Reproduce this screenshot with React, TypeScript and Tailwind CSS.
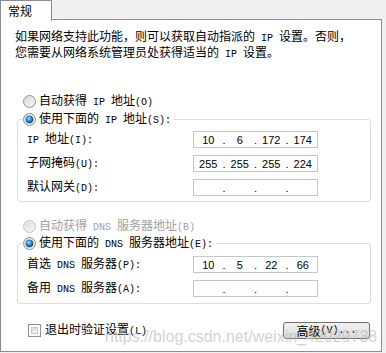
import React from 'react'

// ASCII runs are set in a mono face so they take the 6px cells of the original bitmap font
function T({ s }: { s: string }) {
  const parts = s.split(/([\x20-\x7e]+)/)
  return (
    <>
      {parts.map((p, i) =>
        /^[\x20-\x7e]+$/.test(p) ? (
          <span key={i} className="font-['Liberation_Mono',monospace] text-[10px] whitespace-pre">
            {p}
          </span>
        ) : (
          <span key={i}>{p}</span>
        )
      )}
    </>
  )
}

function Radio({ checked = false, disabled = false }: { checked?: boolean; disabled?: boolean }) {
  return (
    <svg width="13" height="13" viewBox="0 0 13 13" className="shrink-0">
      <defs>
        <linearGradient id="rbg" x1="0" y1="0" x2="1" y2="1">
          <stop offset="0" stopColor="#d6d6d6" />
          <stop offset="1" stopColor="#fbfbfb" />
        </linearGradient>
        <radialGradient id="rdot" cx="0.4" cy="0.35" r="0.7">
          <stop offset="0" stopColor="#a8dcff" />
          <stop offset="0.5" stopColor="#2d89d8" />
          <stop offset="1" stopColor="#0b3e78" />
        </radialGradient>
      </defs>
      <circle cx="6.5" cy="6.5" r="6" fill="url(#rbg)" stroke={disabled ? '#c4c4c4' : '#8e8f8f'} />
      <circle cx="6.5" cy="6.5" r="4.5" fill="none" stroke={disabled ? '#f0f0f0' : '#e4e4e4'} />
      {checked && <circle cx="6.5" cy="6.5" r="3.6" fill="url(#rdot)" stroke="#1a4f8a" strokeWidth="0.6" />}
    </svg>
  )
}

function IpBox({ parts }: { parts?: string[] }) {
  const p = parts ?? ['', '', '', '']
  return (
    <div className="w-[125px] h-[17px] border border-[#c4c8ce] bg-white flex items-center text-[11px] font-['Liberation_Sans',sans-serif] text-black">
      <span className="flex-1 text-center">{p[0]}</span>
      <span className="w-[3px]">.</span>
      <span className="flex-1 text-center">{p[1]}</span>
      <span className="w-[3px]">.</span>
      <span className="flex-1 text-center">{p[2]}</span>
      <span className="w-[3px]">.</span>
      <span className="flex-1 text-center">{p[3]}</span>
    </div>
  )
}

function Row({ label, parts }: { label: string; parts?: string[] }) {
  return (
    <div className="h-[17px] flex items-center">
      <span className="w-[175px] pl-[9px] whitespace-nowrap">
        <T s={label} />
      </span>
      <IpBox parts={parts} />
    </div>
  )
}

export default function App() {
  return (
    <div className="relative w-[386px] h-[353px] bg-[#f0f0f0] text-[12px] text-black font-['Noto_Sans_CJK_SC',sans-serif] overflow-hidden">
      {/* Tab strip */}
      <div className="h-[20px] flex">
        <div className="relative z-10 w-[52px] h-[21px] bg-white border border-b-0 border-[#898c95] pl-[7px] leading-[20px]">
          常规
        </div>
      </div>

      {/* Panel */}
      <div className="w-[382px] h-[333px] -mt-px border border-[#898c95] bg-white flex flex-col leading-[16px]">
        <p className="mt-[9px] ml-[14px] leading-[13px] whitespace-nowrap">
          <T s="如果网络支持此功能，则可以获取自动指派的 IP 设置。否则，" />
          <br />
          <T s="您需要从网络系统管理员处获得适当的 IP 设置。" />
        </p>

        <div className="mt-[32px] ml-[22px] h-[16px] flex items-center gap-[3px]">
          <Radio />
          <span className="whitespace-nowrap">
            <T s="自动获得 IP 地址(O)" />
          </span>
        </div>

        {/* IP group */}
        <div className="mt-[10px] ml-[16px] w-[354px] border border-[#d5dfe5] rounded-[3px] pb-[5px] flex flex-col">
          <div className="-mt-[9px] ml-[4px] h-[16px] flex items-center gap-[3px] bg-white w-fit pl-px pr-[3px]">
            <Radio checked />
            <span className="whitespace-nowrap">
              <T s="使用下面的 IP 地址(S):" />
            </span>
          </div>
          <div className="mt-[4px] flex flex-col gap-[7px]">
            <Row label="IP 地址(I):" parts={['10', '6', '172', '174']} />
            <Row label="子网掩码(U):" parts={['255', '255', '255', '224']} />
            <Row label="默认网关(D):" />
          </div>
        </div>

        <div className="mt-[16px] ml-[22px] h-[16px] flex items-center gap-[3px] text-[#a0a0a0]">
          <Radio disabled />
          <span className="whitespace-nowrap">
            <T s="自动获得 DNS 服务器地址(B)" />
          </span>
        </div>

        {/* DNS group */}
        <div className="mt-[9px] ml-[16px] w-[354px] border border-[#d5dfe5] rounded-[3px] pb-[6px] flex flex-col">
          <div className="-mt-[9px] ml-[4px] h-[16px] flex items-center gap-[3px] bg-white w-fit pl-px pr-[3px]">
            <Radio checked />
            <span className="whitespace-nowrap">
              <T s="使用下面的 DNS 服务器地址(E):" />
            </span>
          </div>
          <div className="mt-[5px] flex flex-col gap-[7px]">
            <Row label="首选 DNS 服务器(P):" parts={['10', '5', '22', '66']} />
            <Row label="备用 DNS 服务器(A):" />
          </div>
        </div>

        <div className="mt-[17px] ml-[27px] mr-[11px] flex items-center justify-between">
          <div className="flex items-center gap-[4px]">
            <div className="w-[13px] h-[13px] border border-[#8e8f8f] bg-white p-[2px]">
              <div className="w-full h-full border border-[#c9c9c9] bg-gradient-to-br from-[#dcdcdc] to-[#f6f6f6]" />
            </div>
            <span className="whitespace-nowrap">
              <T s="退出时验证设置(L)" />
            </span>
          </div>
          <button className="w-[87px] h-[17px] rounded-[3px] border border-[#707070] bg-gradient-to-b from-[#f2f2f2] to-[#dadada] flex items-center justify-center leading-[15px] whitespace-nowrap">
            <T s="高级(V)..." />
          </button>
        </div>
      </div>

      {/* watermark */}
      <div className="absolute left-[105px] top-[325px] text-[16px] font-['Liberation_Sans',sans-serif] text-[#bdbdbd]/70 whitespace-nowrap pointer-events-none">
        https://blog.csdn.net/weixin_42029738
      </div>
    </div>
  )
}
